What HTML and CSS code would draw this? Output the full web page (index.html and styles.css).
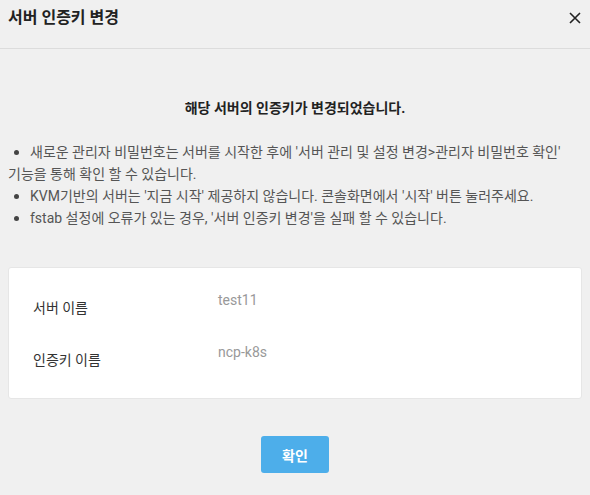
FILE: index.html
```html
<!DOCTYPE html>
<html>
<head>
  <meta charset="utf-8">
  <title>서버 인증키 변경</title>
  <link rel="stylesheet" href="styles.css">
</head>
<body>
  <div class="modal">
    <div class="modal-header">
      <h2 class="modal-title">서버 인증키 변경</h2>
      <button class="modal-close" aria-label="닫기">
        <svg width="12" height="12" viewBox="0 0 12 12">
          <path d="M1 1 L11 11 M11 1 L1 11" stroke="#222" stroke-width="1.6" fill="none"/>
        </svg>
      </button>
    </div>

    <div class="modal-body">
      <p class="result-msg">해당 서버의 인증키가 변경되었습니다.</p>

      <ul class="notice-list">
        <li>새로운 관리자 비밀번호는 서버를 시작한 후에 '서버 관리 및 설정 변경&gt;관리자 비밀번호 확인' 기능을 통해 확인 할 수 있습니다.</li>
        <li>KVM기반의 서버는 '지금 시작' 제공하지 않습니다. 콘솔화면에서 '시작' 버튼 눌러주세요.</li>
        <li>fstab 설정에 오류가 있는 경우, '서버 인증키 변경'을 실패 할 수 있습니다.</li>
      </ul>

      <div class="info-card">
        <div class="info-row">
          <span class="info-label">서버 이름</span>
          <span class="info-value">test11</span>
        </div>
        <div class="info-row">
          <span class="info-label">인증키 이름</span>
          <span class="info-value">ncp-k8s</span>
        </div>
      </div>
    </div>

    <div class="modal-footer">
      <button class="btn-confirm">확인</button>
    </div>
  </div>
</body>
</html>
```

FILE: styles.css
```css
/* Page base */
body {
  margin: 0;
  background: #f0f0f0;
  font-family: Roboto, "Noto Sans CJK KR", sans-serif;
  color: #333;
}

.modal {
  width: 590px;
  height: 495px;
}

/* Header */
.modal-header {
  height: 49px;
  box-sizing: border-box;
  border-bottom: 1px solid #dcdcdc;
  display: flex;
  align-items: center;
  justify-content: space-between;
  padding: 0 9px 12px 8px;
}

.modal-title {
  margin: 0;
  font-size: 16px;
  line-height: 20px;
  font-weight: 700;
  color: #222;
}

.modal-close {
  background: none;
  border: 0;
  padding: 0;
  width: 12px;
  height: 12px;
  cursor: pointer;
}

.modal-close svg {
  display: block;
}

/* Body */
.modal-body {
  padding: 0 8px;
}

.result-msg {
  margin: 49px 0 0;
  text-align: center;
  font-size: 14px;
  font-weight: 700;
  color: #222;
  line-height: 20px;
}

.notice-list {
  list-style: none;
  margin: 23px 0 0;
  padding: 0;
  font-size: 14px;
  line-height: 22px;
  color: #555;
  word-break: keep-all;
}

.notice-list li::before {
  content: "";
  display: inline-block;
  width: 5px;
  height: 5px;
  border-radius: 50%;
  background: #444;
  margin: 0 11px 2px 6px;
  vertical-align: middle;
}

/* Server/key summary card */
.info-card {
  margin-top: 38px;
  background: #fff;
  border: 1px solid #e6e6e6;
  border-radius: 3px;
  padding: 18px 24px;
  height: 132px;
  box-sizing: border-box;
}

.info-row {
  display: flex;
  font-size: 14px;
  height: 52px;
}

.info-label {
  width: 185px;
  padding-top: 11px;
  color: #333;
}

.info-value {
  color: #999;
  padding-top: 6px;
}

/* Footer */
.modal-footer {
  display: flex;
  justify-content: center;
  margin-top: 37px;
}

.btn-confirm {
  width: 68px;
  height: 37px;
  border: 0;
  border-radius: 3px;
  background: #4daeea;
  color: #fff;
  font-family: Roboto, "Noto Sans CJK KR", sans-serif;
  font-size: 14px;
  font-weight: 700;
  cursor: pointer;
}
```
